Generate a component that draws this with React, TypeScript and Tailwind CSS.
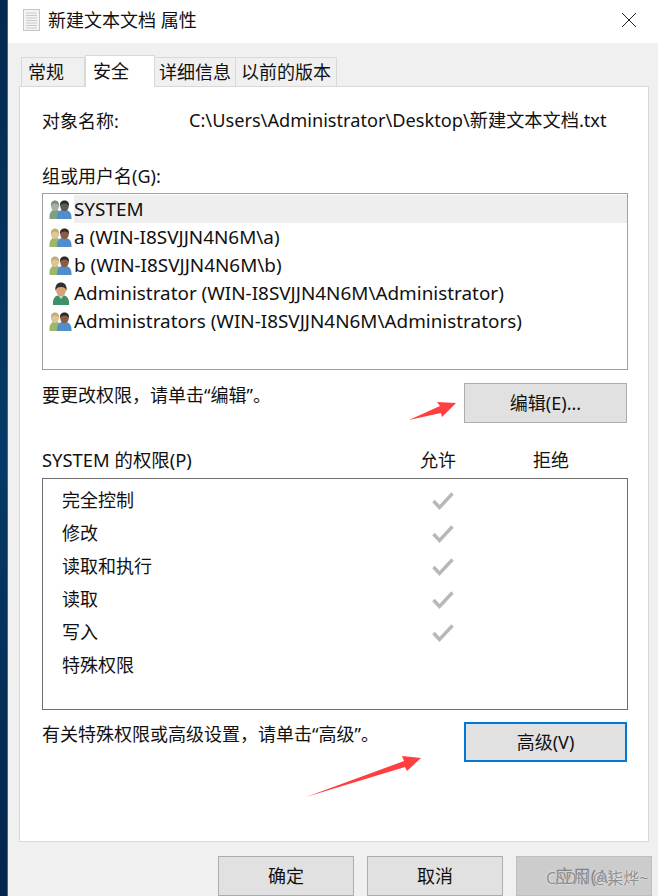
const groupRows = [
  { name: "SYSTEM", kind: "system" },
  { name: "a (WIN-I8SVJJN4N6M\\a)", kind: "group" },
  { name: "b (WIN-I8SVJJN4N6M\\b)", kind: "group" },
  { name: "Administrator (WIN-I8SVJJN4N6M\\Administrator)", kind: "user" },
  { name: "Administrators (WIN-I8SVJJN4N6M\\Administrators)", kind: "group" },
];

const perms = [
  { name: "完全控制", allow: true },
  { name: "修改", allow: true },
  { name: "读取和执行", allow: true },
  { name: "读取", allow: true },
  { name: "写入", allow: true },
  { name: "特殊权限", allow: false },
];

const GroupIcon = ({ kind }: { kind: string }) => {
  if (kind === "user") {
    return (
      <svg className="ml-[3px]" width="18" height="23" viewBox="0 0 18 23" aria-hidden>
        <path d="M1 23c-.5-6 1.500-10 8-10s8.500 4 8 10z" fill="#3d9068" />
        <path d="M6 13l3 4 3-4z" fill="#cfe6d6" />
        <ellipse cx="9" cy="8" rx="5" ry="6.500" fill="#d6a27c" />
        <path d="M3.500 9C2.500 3 6 .5 9 .5s6.500 2.500 5.500 8.500C14 6.500 12.500 5 9 5S4 6.500 3.500 9z" fill="#33302c" />
      </svg>
    );
  }
  const sys = kind === "system";
  return (
    <svg width="23" height="19" viewBox="0 0 23 19" aria-hidden>
      <path d="M0.500 19c-.5-6 1.500-9 5.500-9.500s6 3.500 6 9.500z" fill={sys ? "#7f9f82" : "#9cb76a"} />
      <ellipse cx="6" cy="6" rx="4" ry="5" fill={sys ? "#a8b0a6" : "#e0c59a"} />
      <path d="M2 6.500C1.500 2 4 .5 6 .5s4.500 1.500 4 6C9.500 4.500 8 3.500 6 3.500S2.500 4.500 2 6.500z" fill={sys ? "#7c8a80" : "#c4ab68"} />
      <path d="M8 19c-.5-6 2-9.500 7-9.500s8 3.500 7.500 9.500z" fill="#4f8fcb" />
      <ellipse cx="15.500" cy="6" rx="4.300" ry="5.300" fill={sys ? "#5e5a58" : "#8a5c42"} />
      <path d="M11 6.500C10.500 2 13 .5 15.500 .5S20.500 2 20 6.500C19.500 4.500 18 3.500 15.500 3.500S11.500 4.500 11 6.500z" fill="#2b2a2a" />
    </svg>
  );
};

const Check = () => (
  <svg width="22" height="18" viewBox="0 0 22 18" aria-hidden>
    <path d="M1.500 9l6 6.500L20.500 1.500" fill="none" stroke="#b8b8b8" strokeWidth="3.400" />
  </svg>
);

const WinButton = ({ label, focused, disabled, width }: { label: string; focused?: boolean; disabled?: boolean; width: string }) => (
  <div
    className={`${width} h-[40px] shrink-0 flex items-center justify-center text-[18px] ${
      focused
        ? "border-[2px] border-[#0078d7] bg-[#e1e1e1] text-[#111]"
        : disabled
          ? "border border-[#bfbfbf] bg-[#cccccc] text-[#838383]"
          : "border border-[#adadad] bg-[#e1e1e1] text-[#111]"
    }`}
  >
    {label}
  </div>
);

export default function App() {
  return (
    <div
      className="relative flex h-[896px] w-[658px] overflow-hidden bg-[#f0f0f0] text-[18px] text-[#111]"
      style={{ fontFamily: '"Noto Sans", "Noto Sans CJK SC", sans-serif' }}
    >
      <div className="w-[8px] shrink-0 border-r border-[#2c6cab] bg-gradient-to-b from-[#04294f] via-[#053a68] to-[#04254c]" />

      <div className="flex min-w-0 flex-1 flex-col">
        <div className="flex h-[43px] shrink-0 items-center bg-white pb-[3px] pl-[15px] pr-[21px]">
          <svg width="17" height="22" viewBox="0 0 17 22" aria-hidden>
            <rect x="0.500" y="0.500" width="16" height="21" fill="#f4f4f4" stroke="#c4c4c4" />
            <path d="M3 4h11M3 6.500h11M3 9h11M3 11.500h11M3 14h11M3 16.500h11M3 19h11" stroke="#c9c9c9" strokeWidth="1.200" />
          </svg>
          <span className="ml-[8px] text-[18px] leading-none">新建文本文档 属性</span>
          <svg className="ml-auto" width="16" height="16" viewBox="0 0 16 16" aria-hidden>
            <path d="M1 1l14 14M15 1L1 15" stroke="#222" strokeWidth="1" fill="none" />
          </svg>
        </div>

        <div className="ml-[11px] mt-[12px] flex h-[31px] items-end pl-[2px]">
          <div className="flex h-[29px] w-[64px] items-center border border-b-0 border-[#d9d9d9] bg-[#f0f0f0] pl-[6px]">常规</div>
          <div className="relative z-10 -mb-px flex h-[32px] w-[70px] items-center border border-b-0 border-[#d9d9d9] bg-white pl-[7px]">安全</div>
          <div className="flex h-[29px] w-[81px] items-center justify-center border border-b-0 border-l-0 border-[#d9d9d9] bg-[#f0f0f0]">详细信息</div>
          <div className="flex h-[29px] w-[101px] items-center justify-center border border-b-0 border-l-0 border-[#d9d9d9] bg-[#f0f0f0]">以前的版本</div>
        </div>

        <div className="ml-[11px] flex h-[758px] w-[630px] flex-col border border-[#d9d9d9] bg-white pl-[22px] pr-[20px]">
          <div className="mt-[20px] flex h-[28px] items-center">
            <span className="w-[147px]">对象名称:</span>
            <span className="text-[18.2px]">C:\Users\Administrator\Desktop\新建文本文档.txt</span>
          </div>
          <div className="mt-[27px] flex h-[28px] items-center">组或用户名(G):</div>
          <div className="mt-[3px] flex h-[177px] w-[586px] flex-col border border-[#a0a0a0] pt-[1px]">
            {groupRows.map((row, i) => (
              <div key={row.name} className="flex h-[28px] items-center pl-[6px]">
                <div className="flex w-[25px] shrink-0 justify-start">
                  <GroupIcon kind={row.kind} />
                </div>
                <span className={`flex h-full flex-1 items-center text-[18.9px] ${i === 0 ? "bg-[#eeeeee]" : ""}`}>{row.name}</span>
              </div>
            ))}
          </div>
          <div className="mt-[13px] flex items-start justify-between pr-[1px]">
            <span className="leading-[24px]">要更改权限，请单击“编辑”。</span>
            <WinButton label="编辑(E)..." width="w-[163px]" />
          </div>
          <div className="mt-[23px] flex h-[28px] w-[586px] items-center">
            <span className="w-[358px] text-[18.4px]">SYSTEM 的权限(P)</span>
            <span className="w-[76px] text-center">允许</span>
            <span className="ml-[37px] w-[76px] text-center">拒绝</span>
          </div>
          <div className="mt-[4px] flex h-[232px] w-[586px] flex-col border border-[#6e6e6e] pt-[5px]">
            {perms.map((p) => (
              <div key={p.name} className="flex h-[33px] items-center pl-[19px]">
                <span className="w-[370px]">{p.name}</span>
                {p.allow && <Check />}
              </div>
            ))}
          </div>
          <div className="mt-[12px] flex items-start justify-between pr-[1px]">
            <span className="leading-[24px]">有关特殊权限或高级设置，请单击“高级”。</span>
            <WinButton label="高级(V)" width="w-[163px]" focused />
          </div>
        </div>

        <div className="mt-[14px] flex gap-[13px] pl-[210px]">
          <WinButton label="确定" width="w-[136px]" />
          <WinButton label="取消" width="w-[136px]" />
          <WinButton label="应用(A)" width="w-[136px]" disabled />
        </div>
      </div>

      <svg className="pointer-events-none absolute left-0 top-0" width="658" height="896" aria-hidden>
        <path d="M409 420L440 406 437 402 456 403 442 417 441 413z" fill="#ff3f3f" />
        <path d="M306 797L404 761 402 756 421 758 407 771 405 767z" fill="#ff3f3f" />
      </svg>
      <span className="absolute left-[546px] top-[866px] text-[16px] text-[#8f8f8f] [text-shadow:0_0_2px_#ffffff]">CSDN @柒烨~</span>
    </div>
  );
}
